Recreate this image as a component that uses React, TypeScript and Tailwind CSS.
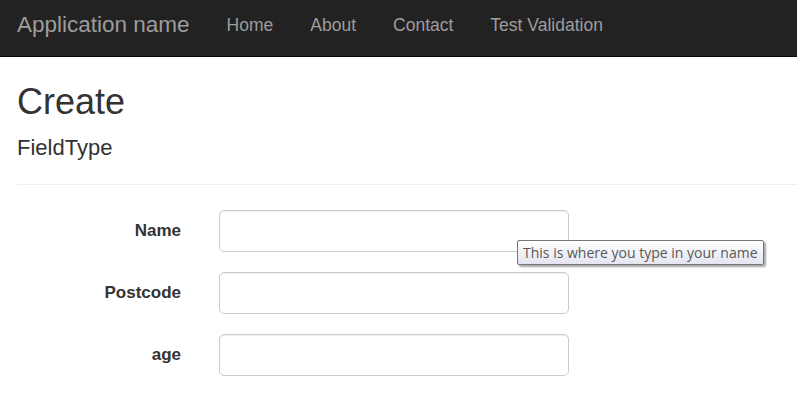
import React from 'react';

const fields = ["Name", "Postcode", "age", ""];

const App: React.FC = () => {
  return (
    <div className="h-screen overflow-hidden bg-white text-[#333]" style={{ fontFamily: '"Liberation Sans", Arial, sans-serif' }}>
      <nav className="h-[57px] bg-[#222] border-b border-[#080808] flex items-center px-[17px] pb-[6px]">
        <span className="text-[22.5px] text-[#9d9d9d] mr-[37px]">Application name</span>
        <ul className="flex items-center gap-[37px] text-[17.5px] text-[#9d9d9d]">
          <li>Home</li>
          <li>About</li>
          <li>Contact</li>
          <li>Test Validation</li>
        </ul>
      </nav>

      <div className="pl-[17px]">
        <h2 className="text-[36px] leading-none mt-[27px]">Create</h2>
        <h4 className="text-[22px] leading-none mt-[17px]">FieldType</h4>
        <hr className="mt-[25px] border-[#eee]" />

        <div className="relative mt-[25px] flex flex-col gap-[20px]">
          {fields.map((label, i) => (
            <div key={i} className="flex items-center">
              <label className="w-[164px] text-right font-bold text-[17px]">{label}</label>
              <input className="ml-[38px] w-[350px] h-[42px] border border-[#ccc] rounded-[5px] shadow-[inset_0_1px_1px_rgba(0,0,0,0.075)]" />
            </div>
          ))}
          <div
            className="absolute left-[500px] top-[30px] h-[25px] px-[5px] flex items-center border border-[#767676] rounded-[2px] bg-gradient-to-b from-white to-[#e4e5f0] shadow-[2px_2px_2px_rgba(0,0,0,0.35)] text-[14px] text-[#575757] whitespace-nowrap"
            style={{ fontFamily: '"Open Sans", "Noto Sans", sans-serif' }}
          >
            This is where you type in your name
          </div>
        </div>
      </div>
    </div>
  );
};

export default App;
